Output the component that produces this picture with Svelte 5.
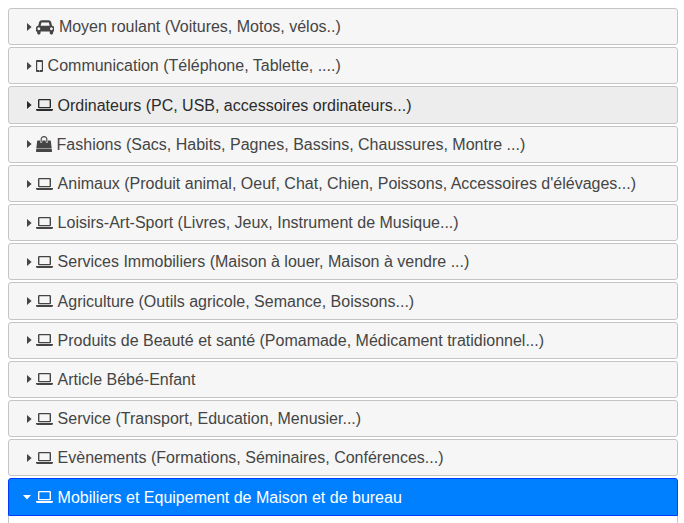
<script>
  const icons = {
    car: {
      box: '0 0 2048 1792',
      width: 18.29,
      d: 'M480 1088q0-66-47-113t-113-47-113 47-47 113 47 113 113 47 113-47 47-113zm36-320h1016l-89-357q-2-8-14-17.5t-21-9.5h-768q-9 0-21 9.5t-14 17.5zm1372 320q0-66-47-113t-113-47-113 47-47 113 47 113 113 47 113-47 47-113zm160-96v384q0 14-9 23t-23 9h-96v128q0 80-56 136t-136 56-136-56-56-136v-128h-1024v128q0 80-56 136t-136 56-136-56-56-136v-128h-96q-14 0-23-9t-9-23v-384q0-93 65.5-158.5t158.5-65.5h28l105-419q23-94 104-157.5t179-63.5h768q98 0 179 63.5t104 157.5l105 419h28q93 0 158.5 65.5t65.5 158.5z'
    },
    mobile: {
      box: '0 0 7 16',
      width: 7,
      d: 'M1 2h5a1 1 0 0 1 1 1v10a1 1 0 0 1-1 1H1a1 1 0 0 1-1-1V3a1 1 0 0 1 1-1zM1.2 4v8h4.6V4zM3 12.5v.8h1v-.8z'
    },
    laptop: {
      box: '0 0 17 16',
      width: 17,
      d: 'M3.2 2h10.6A1.2 1.2 0 0 1 15 3.2v6.9a1.2 1.2 0 0 1-1.2 1.2H3.2A1.2 1.2 0 0 1 2 10.1V3.2A1.2 1.2 0 0 1 3.2 2zM3.4 3.3v6.7h10.2v-6.7zM0 12h17v1q-.4 1-1.5 1h-14Q.4 14 0 13z'
    },
    bag: {
      box: '0 0 1792 1792',
      width: 16,
      d: 'M1757 1408l35 313q3 28-16 50-19 21-48 21h-1664q-29 0-48-21-19-22-16-50l35-313h1722zm-93-839l86 775h-1708l86-775q3-24 21-40.5t43-16.5h256v128q0 53 37.5 90.5t90.5 37.5 90.5-37.5 37.5-90.5v-128h384v128q0 53 37.5 90.5t90.5 37.5 90.5-37.5 37.5-90.5v-128h256q25 0 43 16.5t21 40.5zm-384-185v256q0 26-19 45t-45 19-45-19-19-45v-256q0-106-75-181t-181-75-181 75-75 181v256q0 26-19 45t-45 19-45-19-19-45v-256q0-159 112.5-271.5t271.5-112.5 271.5 112.5 112.5 271.5z'
    }
  };

  const sections = [
    { icon: 'car', title: 'Moyen roulant (Voitures, Motos, vélos..)' },
    { icon: 'mobile', title: 'Communication (Téléphone, Tablette, ....)' },
    { icon: 'laptop', title: 'Ordinateurs (PC, USB, accessoires ordinateurs...)' },
    { icon: 'bag', title: 'Fashions (Sacs, Habits, Pagnes, Bassins, Chaussures, Montre ...)' },
    { icon: 'laptop', title: "Animaux (Produit animal, Oeuf, Chat, Chien, Poissons, Accessoires d'élévages...)" },
    { icon: 'laptop', title: 'Loisirs-Art-Sport (Livres, Jeux, Instrument de Musique...)' },
    { icon: 'laptop', title: 'Services Immobiliers (Maison à louer, Maison à vendre ...)' },
    { icon: 'laptop', title: 'Agriculture (Outils agricole, Semance, Boissons...)' },
    { icon: 'laptop', title: 'Produits de Beauté et santé (Pomamade, Médicament tratidionnel...)' },
    { icon: 'laptop', title: 'Article Bébé-Enfant' },
    { icon: 'laptop', title: 'Service (Transport, Education, Menusier...)' },
    { icon: 'laptop', title: 'Evènements (Formations, Séminaires, Conférences...)' },
    { icon: 'laptop', title: 'Mobiliers et Equipement de Maison et de bureau' }
  ];

  let open = $state(12);
  let hovered = $state(2);
</script>

<div class="accordion">
  {#each sections as section, i}
    {@const icon = icons[section.icon]}
    <button
      class="header"
      class:active={open === i}
      class:hover={hovered === i && open !== i}
      aria-expanded={open === i}
      onclick={() => (open = i)}
      onmouseenter={() => (hovered = i)}
    >
      <span class="marker">
        {#if open === i}
          <svg width="8" height="5" viewBox="0 0 8 5"><path d="M0 0h8L4 4.6z" /></svg>
        {:else}
          <svg width="5" height="8" viewBox="0 0 5 8"><path d="M0 0v8l4.6-4z" /></svg>
        {/if}
      </span>
      <svg class="icon" width={icon.width} height="16" viewBox={icon.box}><path fill-rule={section.icon === 'laptop' || section.icon === 'mobile' ? 'evenodd' : 'nonzero'} d={icon.d} /></svg>
      <span class="title">{section.title}</span>
    </button>
    {#if open === i}
      <div class="panel"></div>
    {/if}
  {/each}
</div>

<style>
  :global(body) {
    background: #fff;
    overflow: hidden;
  }
  .accordion {
    width: 670px;
    height: 523px;
    overflow: hidden;
    box-sizing: border-box;
    padding-top: 8px;
    margin-left: 8px;
    font-family: 'Liberation Sans', Arial, sans-serif;
  }
  .header {
    display: flex;
    align-items: center;
    width: 100%;
    height: 37.2px;
    box-sizing: border-box;
    margin: 0 0 2px;
    padding: 0.4px 8px 0 14px;
    border: 1px solid #c5c5c5;
    border-radius: 3px;
    background: #f6f6f6;
    color: #454545;
    font: 16px/19.2px 'Liberation Sans', Arial, sans-serif;
    text-align: left;
    white-space: nowrap;
  }
  .hover {
    background: #ededed;
    color: #2b2b2b;
  }
  .active {
    height: 37.6px;
    margin-bottom: 0;
    border-color: #003eff;
    border-radius: 3px 3px 0 0;
    background: #007fff;
    color: #fff;
  }
  svg {
    display: block;
    flex: none;
    fill: currentColor;
  }
  .marker {
    display: flex;
    justify-content: flex-end;
    width: 9px;
    margin-right: 4px;
  }
  .active .marker {
    justify-content: flex-start;
  }
  .title {
    margin-left: 4.6px;
  }
  .panel {
    height: 40px;
    border: 1px solid #c5c5c5;
    border-top: 0;
  }
</style>
